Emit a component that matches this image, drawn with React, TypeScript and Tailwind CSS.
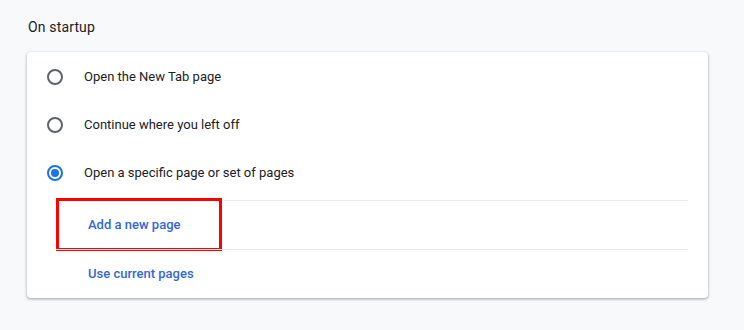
import type { ReactNode } from "react";

const options = [
  { label: "Open the New Tab page", checked: false },
  { label: "Continue where you left off", checked: false },
  { label: "Open a specific page or set of pages", checked: true },
];

function Radio({ checked }: { checked: boolean }) {
  return (
    <span
      className={`flex h-4 w-4 items-center justify-center rounded-full border-2 ${
        checked ? "border-[#1a73e8]" : "border-[#5f6368]"
      }`}
    >
      {checked && <span className="h-2 w-2 rounded-full bg-[#1a73e8]" />}
    </span>
  );
}

function LinkRow({ children, marked }: { children: ReactNode; marked?: boolean }) {
  return (
    <div className="relative flex h-[49px] items-center border-t border-[#e8eaed] pl-8">
      <span className="text-[13px] font-medium text-[#3367d6]">{children}</span>
      {marked && (
        <div className="absolute -top-[3px] left-0 h-[53px] w-[166px] border-[3px] border-[#ff0000]" />
      )}
    </div>
  );
}

export default function App() {
  return (
    <div
      className="h-[330px] w-[744px] bg-[#f8f9fa] pt-[17px]"
      style={{ fontFamily: "Roboto, 'Liberation Sans', sans-serif" }}
    >
      <h2 className="ml-[28px] h-5 text-[14px] leading-5 tracking-[0.15px] text-[#202124]">
        On startup
      </h2>
      <div className="ml-[27px] mt-[15px] w-[681px] rounded bg-white pt-px shadow-[0_1px_2px_rgba(60,64,67,0.3),0_1px_3px_1px_rgba(60,64,67,0.15)]">
        {options.map((o) => (
          <div key={o.label} className="flex h-12 items-center pl-[20px]">
            <Radio checked={o.checked} />
            <span className="ml-[21px] text-[13px] text-[#202124]">{o.label}</span>
          </div>
        ))}
        <div className="ml-[29px] mr-[20px] pt-[3px]">
          <LinkRow marked>Add a new page</LinkRow>
          <LinkRow>Use current pages</LinkRow>
        </div>
      </div>
    </div>
  );
}
